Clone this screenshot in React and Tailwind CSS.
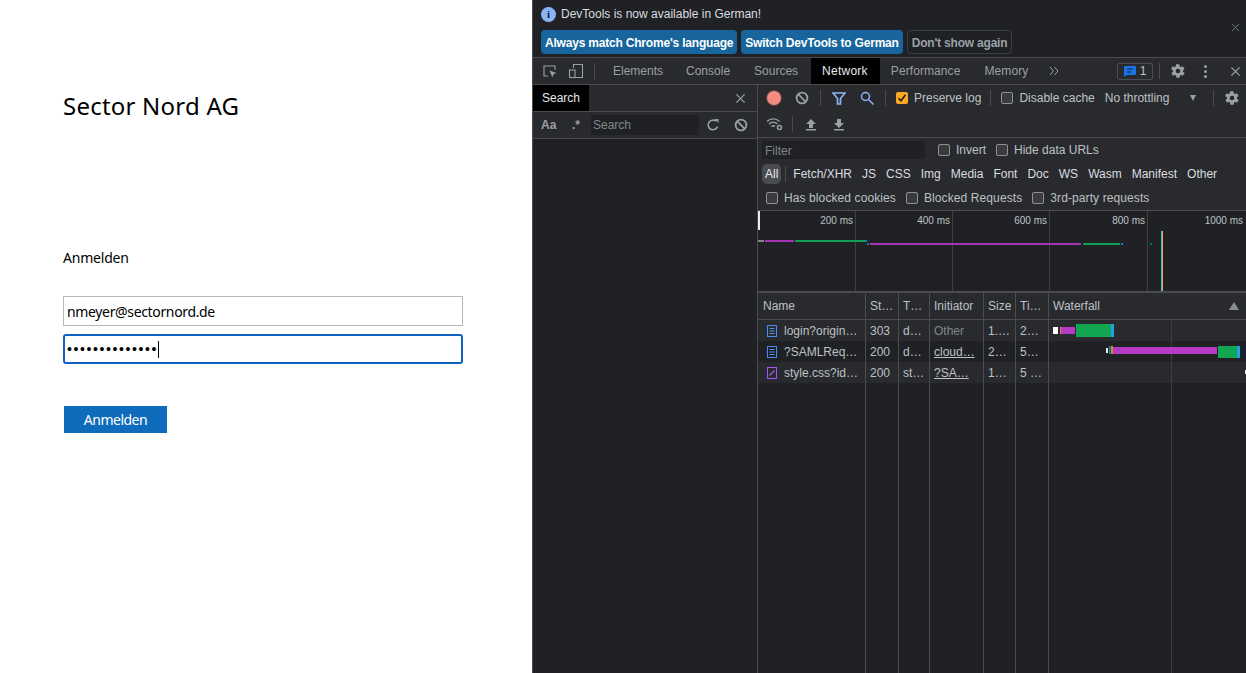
const Check = ({ label, checked, className = "" }) => (
  <label className={`flex items-center gap-[6px] whitespace-nowrap ${className}`}>
    {checked ? (
      <span className="w-[12px] h-[12px] rounded-[2px] bg-[#f9a825] flex items-center justify-center">
        <svg width="10" height="10" viewBox="0 0 10 10"><path d="M1.5 5.2 4 7.8 8.5 1.8" fill="none" stroke="#202124" strokeWidth="1.6" /></svg>
      </span>
    ) : (
      <span className="w-[12px] h-[12px] rounded-[2px] border border-[#8e9297] bg-[#3b3b3b]" />
    )}
    <span>{label}</span>
  </label>
);

const Gear = ({ size = 16, color = "#9aa0a6" }) => (
  <svg width={size} height={size} viewBox="0 0 24 24">
    <path fill={color} fillRule="evenodd" d="M19.4 13a7.5 7.5 0 0 0 0-2l2.1-1.6a.5.5 0 0 0 .1-.7l-2-3.4a.5.5 0 0 0-.6-.2l-2.5 1a7.300 7.300 0 0 0-1.700-1L14 2.400a.5.5 0 0 0-.5-.4h-4a.5.5 0 0 0-.5.400l-.4 2.700a7.300 7.300 0 0 0-1.700 1l-2.500-1a.5.5 0 0 0-.6.2l-2 3.400a.5.500 0 0 0 .1.700L4.500 11a7.500 7.500 0 0 0 0 2l-2.100 1.600a.5.500 0 0 0-.1.700l2 3.400c.1.200.4.300.6.200l2.500-1c.5.400 1.100.7 1.700 1l.4 2.700c0 .200.200.400.500.400h4c.300 0 .500-.200.500-.400l.4-2.700c.600-.300 1.200-.600 1.700-1l2.500 1c.200.100.500 0 .600-.200l2-3.400a.5.500 0 0 0-.1-.700L19.400 13ZM12 15.500a3.500 3.500 0 1 1 0-7 3.500 3.500 0 0 1 0 7Z" />
  </svg>
);

const Ban = ({ size = 14 }) => (
  <svg width={size} height={size} viewBox="0 0 14 14" fill="none" stroke="#9aa0a6" strokeWidth="1.8">
    <circle cx="7" cy="7" r="5.4" />
    <path d="M3.200 3.200 10.800 10.800" />
  </svg>
);

const X = ({ size = 12, color = "#9aa0a6", w = 1.4 }) => (
  <svg width={size} height={size} viewBox="0 0 12 12" stroke={color} strokeWidth={w}>
    <path d="M1.500 1.500 10.500 10.500M10.500 1.500 1.500 10.500" />
  </svg>
);

const Sep = ({ className = "" }) => <span className={`w-px h-[16px] bg-[#4a4c50] ${className}`} />;

const DocIcon = ({ kind }) =>
  kind === "doc" ? (
    <svg width="10" height="12" viewBox="0 0 10 12" fill="none" stroke="#4a8cf0">
      <rect x=".5" y=".5" width="9" height="11" />
      <path d="M2.500 3.500h5M2.500 6h5M2.500 8.500h5" />
    </svg>
  ) : (
    <svg width="10" height="12" viewBox="0 0 10 12" fill="none" stroke="#a855f7">
      <rect x=".5" y=".5" width="9" height="11" />
      <path d="M2.500 8.500 7.500 3.500" strokeWidth="1.300" />
    </svg>
  );

const rows = [
  { kind: "doc", name: "login?origin…", st: "303", t: "d…", init: "Other", link: false, size: "1.…", time: "2…" },
  { kind: "doc", name: "?SAMLReq…", st: "200", t: "d…", init: "cloud…", link: true, size: "2…", time: "5…" },
  { kind: "css", name: "style.css?id…", st: "200", t: "st…", init: "?SA…", link: true, size: "1…", time: "5 …" },
];

const cols = "grid-cols-[107px_33px_31px_54px_32px_33px_198px]";

const Table = () => (
  <div className="relative flex-1 min-h-0 text-[12px] text-[#bdc1c6]">
    <div className={`grid ${cols} h-[27px] bg-[#292a2d] border-b border-[#4a4c50] items-center`}>
      {["Name", "St…", "T…", "Initiator", "Size", "Ti…"].map((h, i) => (
        <div key={h} className="h-full flex items-center pl-[5px] overflow-hidden whitespace-nowrap">{h}</div>
      ))}
      <div className="h-full flex items-center justify-between pl-[5px] pr-[7px]">
        <span>Waterfall</span>
        <span className="w-0 h-0 border-x-[5px] border-x-transparent border-b-[8px] border-b-[#8a8d91]" />
      </div>
    </div>
    {rows.map((r, i) => (
      <div key={r.name} className={`grid ${cols} h-[21px] items-center ${i % 2 === 0 ? "bg-[#292a2d]" : "bg-[#202124]"}`}>
        <div className="flex items-center gap-[7px] pl-[9px] whitespace-nowrap"><DocIcon kind={r.kind} /><span>{r.name}</span></div>
        <div className="pl-[5px]">{r.st}</div>
        <div className="pl-[5px] whitespace-nowrap">{r.t}</div>
        <div className={`pl-[5px] whitespace-nowrap ${r.link ? "underline" : "text-[#80868b]"}`}>{r.init}</div>
        <div className="pl-[5px] whitespace-nowrap">{r.size}</div>
        <div className="pl-[5px] whitespace-nowrap">{r.time}</div>
        <div />
      </div>
    ))}
    <svg className="absolute left-0 top-0 pointer-events-none" width="488" height="382" viewBox="0 0 488 382">
      {[107, 140, 171, 225, 257, 290].map((x) => (
        <rect key={x} x={x} y="0" width="1" height="382" fill="#4a4c50" />
      ))}
      <rect x="413" y="27" width="1" height="355" fill="#3c3d41" />
      <rect x="295" y="34" width="5" height="7" fill="#ffffff" />
      <rect x="302" y="34" width="1" height="7" fill="#e8803a" />
      <rect x="303" y="34" width="14" height="7" fill="#b53bc4" />
      <rect x="318" y="31" width="35" height="13" fill="#12a650" />
      <rect x="353" y="31" width="3" height="13" fill="#1ba3ee" />
      <rect x="348" y="55" width="2" height="5" fill="#e8eaed" />
      <rect x="351" y="53" width="1.500" height="8" fill="#0f9d7a" />
      <rect x="353" y="53" width="2" height="8" fill="#e8803a" />
      <rect x="355" y="54" width="104" height="7" fill="#b53bc4" />
      <rect x="460" y="53" width="19" height="12" fill="#12a650" />
      <rect x="479" y="53" width="3" height="12" fill="#1ba3ee" />
      <rect x="487" y="77" width="1" height="4" fill="#e8eaed" />
    </svg>
  </div>
);

const Overview = () => (
  <div className="relative h-[82px] shrink-0 bg-[#202124] border-b-[2px] border-[#4a4c50] text-[10px] text-[#bdc1c6] flex">
    {["200 ms", "400 ms", "600 ms", "800 ms"].map((t, i) => (
      <div key={t} className={`${i === 3 || i === 0 ? "w-[98px]" : "w-[97px]"} h-full border-r border-[#3f4044] text-right pr-[2px] pt-[3px] leading-[13px]`}>{t}</div>
    ))}
    <div className="flex-1 h-full text-right pr-[3px] pt-[3px] leading-[13px]">1000 ms</div>
    <svg className="absolute left-0 top-0" width="488" height="81" viewBox="0 0 488 81">
      <rect x="0" y="0" width="2" height="19" fill="#e8eaed" />
      <rect x="0" y="29" width="6" height="2" fill="#80868b" />
      <rect x="7" y="29" width="29" height="2" fill="#a633b5" />
      <rect x="37" y="29" width="71" height="2" fill="#0f9d58" />
      <rect x="107" y="29" width="2" height="2" fill="#1a7fb8" />
      <rect x="109" y="32" width="2" height="2" fill="#0f8a7a" />
      <rect x="112" y="32" width="211" height="2" fill="#a633b5" />
      <rect x="325" y="32" width="37" height="2" fill="#0f9d58" />
      <rect x="363" y="32" width="2" height="2" fill="#1a7fb8" />
      <rect x="392" y="32" width="2" height="2" fill="#0f6a50" />
      <rect x="403" y="20" width="1" height="60" fill="#40c4b0" />
      <rect x="404" y="20" width="1" height="60" fill="#f0a070" />
    </svg>
  </div>
);

export default function App() {
  return (
    <div className="flex w-[1246px] h-[673px] overflow-hidden bg-white font-['Liberation_Sans',sans-serif]">
      <main className="w-[532px] shrink-0 pl-[63px] font-['Noto_Sans',sans-serif] text-black">
        <h1 className="mt-[88px] text-[24px] leading-[36px] h-[36px] tracking-[0.22px]">Sector Nord AG</h1>
        <p className="mt-[124px] text-[14px] leading-[20px] tracking-[-0.2px]">Anmelden</p>
        <div className="mt-[28px] w-[400px] h-[30px] border border-[#b8b8b8] px-[3px] flex items-center text-[14px] tracking-[-0.35px]">nmeyer@sectornord.de</div>
        <div className="mt-[8px] w-[400px] h-[30px] border-2 border-[#0f62c0] rounded-[3px] pl-[2px] flex items-center">
          <span className="tracking-[1.6px] font-['Liberation_Sans',sans-serif] text-[14px]">••••••••••••••</span>
          <span className="w-px h-[17px] bg-black" />
        </div>
        <button className="mt-[42px] block w-[103px] h-[27px] ml-px bg-[#0f6cbd] text-white text-[14px] tracking-[-0.5px]">Anmelden</button>
      </main>

      <section className="flex-1 min-w-0 flex flex-col bg-[#202124] border-l border-[#4a4c50] text-[12px] text-[#bdc1c6]">
        {/* language infobar */}
        <div className="relative h-[58px] shrink-0 pl-[8px] border-b border-[#4a4c50] bg-[#202124]">
          <div className="flex items-center gap-[5px] h-[28px] text-[#dadce0]">
            <span className="w-[15px] h-[15px] rounded-full bg-[#8ab4f8] flex items-center justify-center text-[#202124] text-[11px] font-bold font-['Liberation_Serif',serif]">i</span>
            <span>DevTools is now available in German!</span>
          </div>
          <div className="flex gap-[4px] items-center mt-[2px]">
            <button className="h-[24px] pt-[2px] px-[4px] rounded-[4px] bg-[#17659c] text-white font-bold whitespace-nowrap tracking-[-0.2px]">Always match Chrome's language</button>
            <button className="h-[24px] pt-[2px] px-[4px] rounded-[4px] bg-[#17659c] text-white font-bold whitespace-nowrap tracking-[-0.2px]">Switch DevTools to German</button>
            <button className="h-[24px] pt-[1px] px-[4px] rounded-[4px] border border-[#3c3f43] text-[#9aa0a6] font-bold whitespace-nowrap tracking-[-0.2px]">Don't show again</button>
          </div>
          <span className="absolute right-[6px] top-[23px]"><X size={9} color="#7d8186" w={1.2} /></span>
        </div>

        {/* tabs */}
        <div className="h-[27px] shrink-0 flex items-center bg-[#292a2d] border-b border-[#4a4c50] pl-[9px] pr-[5px]">
          <svg width="16" height="16" viewBox="0 0 16 16" fill="none" stroke="#9aa0a6" strokeWidth="1.100">
            <path d="M6 13H2V3h11v4" />
            <path d="m7.500 7.500 7 2.500-3 1.200-1.200 3z" fill="#9aa0a6" stroke="none" />
          </svg>
          <svg className="ml-[10px]" width="16" height="16" viewBox="0 0 16 16" fill="none" stroke="#9aa0a6" strokeWidth="1.100">
            <path d="M5.500 5V1.500h9v13h-9" />
            <rect x="1.500" y="7" width="5.500" height="7.500" />
          </svg>
          <Sep className="ml-[10px]" />
          <div className="flex ml-[6px] h-full items-center text-[#9aa0a6]">
            <span className="pl-[12px] pr-[11px] h-full flex items-center">Elements</span>
            <span className="px-[12px] h-full flex items-center">Console</span>
            <span className="pl-[12px] pr-[13px] h-full flex items-center">Sources</span>
            <span className="pl-[11px] pr-[12px] h-full flex items-center bg-black text-[#e8eaed] tracking-[0.25px]">Network</span>
            <span className="pl-[11px] pr-[12px] h-full flex items-center tracking-[0.08px]">Performance</span>
            <span className="px-[12px] h-full flex items-center tracking-[0.1px]">Memory</span>
          </div>
          <svg className="ml-[9px]" width="10" height="10" viewBox="0 0 10 10" fill="none" stroke="#9aa0a6"><path d="m1 1 3.500 4L1 9M5.500 1 9 5 5.500 9" /></svg>
          <div className="ml-auto flex items-center">
            <span className="h-[17px] w-[36px] border border-[#4a4c50] rounded-[2px] flex items-center justify-center gap-[4px]">
              <svg width="12" height="11" viewBox="0 0 12 11"><path fill="#1a73e8" d="M1 0h10a1 1 0 0 1 1 1v7a1 1 0 0 1-1 1H3l-3 2V1a1 1 0 0 1 1-1Z" /><path d="M3 3h6M3 6h4" stroke="#202124" /></svg>
              <span className="text-[#bdc1c6]">1</span>
            </span>
            <Sep className="ml-[6px]" />
            <span className="ml-[10px] flex"><Gear size={16} /></span>
            <span className="ml-[18px] flex flex-col gap-[2px]">
              <i className="w-[3px] h-[3px] rounded-full bg-[#9aa0a6]" /><i className="w-[3px] h-[3px] rounded-full bg-[#9aa0a6]" /><i className="w-[3px] h-[3px] rounded-full bg-[#9aa0a6]" />
            </span>
            <span className="ml-[23px] flex"><X size={11} /></span>
          </div>
        </div>

        {/* body */}
        <div className="flex-1 min-h-0 flex">
          {/* search drawer */}
          <aside className="w-[225px] shrink-0 border-r border-[#4a4c50] flex flex-col">
            <div className="h-[27px] shrink-0 bg-[#292a2d] border-b border-[#4a4c50] flex items-center justify-between pr-[11px]">
              <span className="h-full bg-black text-[#e8eaed] px-[9px] flex items-center">Search</span>
              <X size={11} />
            </div>
            <div className="h-[27px] shrink-0 bg-[#292a2d] border-b border-[#4a4c50] flex items-center">
              <span className="ml-[8px] w-[20px] font-bold text-[#9aa0a6]">Aa</span>
              <span className="ml-[11px] w-[16px] font-bold text-[#9aa0a6]">.*</span>
              <span className="ml-[3px] w-[108px] h-[20px] bg-[#202124] px-[2px] flex items-center text-[#80868b]">Search</span>
              <svg className="ml-[7px]" width="14" height="14" viewBox="0 0 14 14" fill="none" stroke="#9aa0a6" strokeWidth="1.600"><path d="M11.500 8.500A4.800 4.800 0 1 1 10 3.200" /><path d="M8.500 1h4v4z" fill="#9aa0a6" stroke="none" /></svg>
              <span className="ml-[14px] flex"><Ban /></span>
            </div>
          </aside>

          {/* network panel */}
          <div className="flex-1 min-w-0 flex flex-col">
            <div className="h-[53px] shrink-0 bg-[#292a2d] border-b border-[#4a4c50] pl-[8px] pr-[5px]">
              <div className="h-[26px] flex items-center">
                <span className="ml-px w-[14px] h-[14px] rounded-full bg-[#f28b82] shadow-[0_0_0_1px_#5a3f3f]" />
                <span className="ml-[14px] flex"><Ban /></span>
                <Sep className="ml-[11px]" />
                <svg className="ml-[11px]" width="14" height="13" viewBox="0 0 14 13" fill="none" stroke="#8ab4f8" strokeWidth="1.700"><path d="M1 1h12L8.500 6.500V12h-3V6.500z" /></svg>
                <svg className="ml-[14px]" width="14" height="14" viewBox="0 0 14 14" fill="none" stroke="#8ab4f8" strokeWidth="1.500"><circle cx="5.500" cy="5.500" r="4" /><path d="m8.500 8.500 5 5" /></svg>
                <Sep className="ml-[11px]" />
                <Check className="ml-[10px]" label="Preserve log" checked />
                <Sep className="ml-[9px]" />
                <Check className="ml-[10px]" label="Disable cache" />
                <span className="ml-[10px] whitespace-nowrap">No throttling</span>
                <span className="ml-[21px] w-0 h-0 border-x-[3.500px] border-x-transparent border-t-[6px] border-t-[#9aa0a6]" />
                <Sep className="ml-[17px]" />
                <span className="ml-[10px] flex"><Gear size={16} /></span>
              </div>
              <div className="h-[26px] flex items-center">
                <svg width="17" height="14" viewBox="0 0 17 14" fill="none" stroke="#9aa0a6" strokeWidth="1.400"><path d="M1 4.500C4.500 1 10 1 13.500 4.500M3 7c2.500-2.300 6-2.300 8.500 0M5.500 9.500c1.200-1 2.500-1 3.500 0" /><circle cx="13.500" cy="10.500" r="2" strokeWidth="1.500" /></svg>
                <Sep className="ml-[9px]" />
                <svg className="ml-[12px]" width="12" height="13" viewBox="0 0 12 13" fill="#9aa0a6"><path d="M6 1 11 6H8v4H4V6H1zM1 11h10v1.500H1z" /></svg>
                <svg className="ml-[16px]" width="12" height="13" viewBox="0 0 12 13" fill="#9aa0a6"><path d="M4 1h4v4h3L6 10 1 5h3zM1 11h10v1.500H1z" /></svg>
              </div>
            </div>

            <div className="h-[73px] shrink-0 bg-[#292a2d] border-b border-[#4a4c50] pl-[4px]">
              <div className="flex items-center h-[24px]">
                <span className="w-[163px] h-[18px] bg-[#202124] px-[3px] pt-[2px] flex items-center text-[#80868b]">Filter</span>
                <Check className="ml-[13px]" label="Invert" />
                <Check className="ml-[10px]" label="Hide data URLs" />
              </div>
              <div className="flex items-center h-[24px] text-[#dadce0]">
                <span className="px-[3px] h-[20px] flex items-center rounded-[5px] bg-[#4a4c50] text-[#e8eaed] mr-[4px]">All</span>
                <Sep className="mr-[7px]" />
                <div className="flex gap-[10px] whitespace-nowrap">
                  {["Fetch/XHR", "JS", "CSS", "Img", "Media", "Font", "Doc", "WS", "Wasm", "Manifest", "Other"].map((t) => <span key={t}>{t}</span>)}
                </div>
              </div>
              <div className="flex items-center h-[24px] pl-[4px] gap-[10px] tracking-[0.1px]">
                <Check label="Has blocked cookies" />
                <Check label="Blocked Requests" />
                <Check label="3rd-party requests" />
              </div>
            </div>

            <Overview />
            <Table />
          </div>
        </div>
      </section>
    </div>
  );
}
